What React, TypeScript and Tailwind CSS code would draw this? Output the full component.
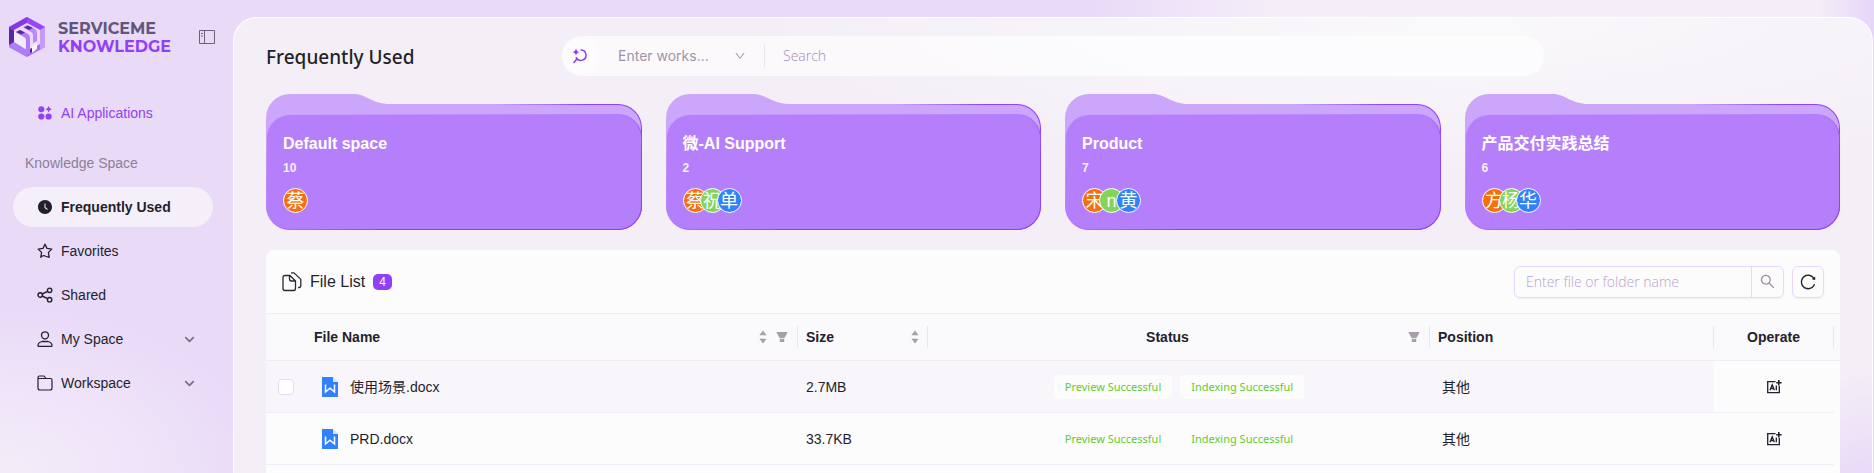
import React from "react";
import {
  AiFillClockCircle,
  AiFillFilter,
  AiOutlineDown,
  AiOutlineReload,
  AiOutlineSearch,
} from "react-icons/ai";
import { ChevronDown } from "lucide-react";

const ARIAL = "font-['Liberation_Sans','Noto_Sans_CJK_SC',sans-serif]";

function Logo() {
  return (
    <svg width="36" height="40" viewBox="0 0 36 40" aria-hidden="true">
      <path d="M18 0 36 10v20L18 40 0 30V10Z" fill="#a66bf7" />
      <path d="M18 0 0 10v18l5-2V13l13-7Z" fill="#8438e8" />
      <path d="M0 11l5 3v12l-5 3Z" fill="#5b25a8" />
      <path d="M18 0 36 10 31 13 18 6Z" fill="#9747f5" />
      <path d="M31 13l5-3v20l-5 3Z" fill="#c39bfa" />
      <path d="M5 13 18 6l13 7v14l-13 7-13-7Z" fill="#ebdafb" />
      <path d="M5 15l11 6v13L5 28Z" fill="#f3ecfb" />
      <path d="M14 10l4-2 8 4q2 1 2 4v8l-4 2v-8q0-2-2-3Z" fill="#b98afb" />
      <path d="M7 15l4-2 8 4q2 1 2 4v15l-4 2V23q0-2-2-3Z" fill="#b07cfa" />
      <path d="M7 15l4-2 5 2.500-4 2ZM15 10.500l4-2 5 2.500-4 2Z" fill="#5b25a8" />
      <path d="M0 28l5-3 13 8v7L0 30Z" fill="#b07cfa" />
      <path d="M23 29l5-3v6l-5 4Z" fill="#f6f2fa" />
      <path d="M21 32l2-1v4l-2 1Z" fill="#4b2a80" />
    </svg>
  );
}

const CollapseIcon = () => (
  <svg width="16" height="14" viewBox="0 0 16 14" fill="none" stroke="#6d6078" aria-hidden="true">
    <path d="M.5.5h15v13H.5ZM5.500.5v13M2 3.500h2M2 6h2" />
  </svg>
);

const AppsIcon = () => (
  <svg width="14" height="14" viewBox="0 0 14 14" fill="#9240f5" aria-hidden="true">
    <circle cx="3.300" cy="3.300" r="3" />
    <circle cx="3.300" cy="10.500" r="3.100" />
    <circle cx="10.600" cy="10.500" r="3.100" />
    <path d="M10.600 0q.5 2.600 3.200 3.200-2.700.6-3.200 3.200-.5-2.600-3.200-3.200Q10.100 2.600 10.600 0Z" />
  </svg>
);

const StarIcon = () => (
  <svg width="16" height="16" viewBox="0 0 16 16" fill="none" stroke="#241f2c" strokeWidth="1.300" strokeLinejoin="round" aria-hidden="true">
    <path d="M8 1.200 10 5.400l4.800.7-3.400 3.300.8 4.900Q10 14 8 13t-4.200 1.300l.8-4.900L1.200 6.100 6 5.400Z" />
  </svg>
);

const ShareIcon = () => (
  <svg width="16" height="16" viewBox="0 0 16 16" fill="none" stroke="#241f2c" strokeWidth="1.400" aria-hidden="true">
    <circle cx="3.200" cy="8" r="2.200" />
    <circle cx="12.600" cy="3.300" r="2.200" />
    <circle cx="12.600" cy="12.700" r="2.200" />
    <path d="m5.200 7 5.400-2.700M5.200 9l5.400 2.700" />
  </svg>
);

const UserIcon = () => (
  <svg width="16" height="16" viewBox="0 0 16 16" fill="none" stroke="#241f2c" strokeWidth="1.300" aria-hidden="true">
    <circle cx="8" cy="4.300" r="3.500" />
    <path d="M5 10.500h6q4 1.200 4 3.900 0 .9-.9.900H1.900q-.9 0-.9-.9 0-2.700 4-3.900Z" />
  </svg>
);

const FolderIcon = () => (
  <svg width="16" height="16" viewBox="0 0 16 16" fill="none" stroke="#241f2c" strokeWidth="1.200" aria-hidden="true">
    <path d="M1 13V2.500Q1 1 2.500 1H7l2 2.500h4.500Q15 3.500 15 5v8q0 2-2 2H3q-2 0-2-2ZM1 3.500h8" />
  </svg>
);

const MagicSearchIcon = () => (
  <svg width="16" height="16" viewBox="0 0 16 16" fill="none" stroke="#8f3df3" strokeWidth="1.500" aria-hidden="true">
    <path d="M9 2a5.200 5.200 0 1 1-4.800 7.600M4.600 11.200 2 14.500" strokeLinecap="round" />
    <path d="M4 .2Q4.500 3.600 7.800 4 4.500 4.500 4 7.800 3.500 4.500.2 4 3.500 3.600 4 .2Z" fill="#8f3df3" stroke="none" />
  </svg>
);

const FilesIcon = () => (
  <svg width="20" height="20" viewBox="0 0 20 20" fill="none" stroke="#2c2636" strokeWidth="1.300" strokeLinejoin="round" aria-hidden="true">
    <path d="M8 3.500H3Q1 3.500 1 5.500v11q0 2 2 2h8.500q2 0 2-2V9ZM7.500 3.500V7q0 2 2 2h4" />
    <path d="M9 .9h3l6.800 6.500v6q0 2.300-2.800 2.300" />
  </svg>
);

const WordIcon = () => (
  <svg width="16" height="20" viewBox="0 0 16 20" aria-hidden="true">
    <path d="M0 0h11v5h5v15H0Z" fill="#3080ff" />
    <path d="M11 0l5 5h-5Z" fill="#ead9f8" />
    <path d="M3.500 7.500v7.500l4.500-3.800 4.500 3.800V7.500" fill="none" stroke="#fff" strokeWidth="1.500" />
  </svg>
);

const AiAddIcon = () => (
  <svg width="16" height="14" viewBox="0 0 16 14" fill="none" stroke="#241f2c" strokeWidth="1.300" aria-hidden="true">
    <path d="M9.500 1.700H1.700v11h11.600V6" />
    <path d="m4 10.300 2.200-5.600 2.200 5.600M4.800 8.500h2.800M10.300 5.500v4.800" />
    <path d="M12.800 0v5.400M10.200 2.700h5.400" strokeWidth="1.600" />
  </svg>
);

const SortIcon = () => (
  <svg width="8" height="14" viewBox="0 0 8 14" fill="#a79dab" aria-hidden="true">
    <path d="M4 .5 7.600 5.200H.4ZM.4 8.800h7.200L4 13.500Z" />
  </svg>
);

function NavItem(props: {
  icon: React.ReactNode;
  label: string;
  active?: boolean;
  expandable?: boolean;
  className?: string;
}) {
  return (
    <a
      href="#"
      className={`flex h-10 items-center rounded-full pr-4 pl-6 text-sm ${
        props.active ? "bg-[#f4eff8] font-bold" : ""
      } ${props.className ?? "text-[#241f2c]"}`}
    >
      <span className="mr-2 flex w-4 justify-center">{props.icon}</span>
      <span className="flex-1">{props.label}</span>
      {props.expandable && <ChevronDown size={15} strokeWidth={2.8} className="text-[#7a7084]" />}
    </a>
  );
}

function Sidebar() {
  return (
    <aside className="flex w-[233px] shrink-0 flex-col">
      <div className="flex items-center pt-[17px] pr-[18px] pl-[9px]">
        <Logo />
        <div className="ml-[13px] flex-1 pt-0.5 font-['Montserrat','Inter',sans-serif] text-base leading-[18px] font-bold">
          <div className="text-[#62547c]">SERVICEME</div>
          <div className="text-[#9240f5]">KNOWLEDGE</div>
        </div>
        <button type="button" aria-label="Collapse sidebar">
          <CollapseIcon />
        </button>
      </div>
      <nav className="mt-9 flex flex-col gap-1 pr-5 pl-[13px]">
        <NavItem icon={<AppsIcon />} label="AI Applications" className="text-[#9240f5]" />
        <h2 className="mt-4 mb-2.5 pl-3 text-sm text-[#8c8096]">Knowledge Space</h2>
        <NavItem icon={<AiFillClockCircle size={16} />} label="Frequently Used" active />
        <NavItem icon={<StarIcon />} label="Favorites" />
        <NavItem icon={<ShareIcon />} label="Shared" />
        <NavItem icon={<UserIcon />} label="My Space" expandable />
        <NavItem icon={<FolderIcon />} label="Workspace" expandable />
      </nav>
    </aside>
  );
}

const AVATAR_COLORS = ["bg-[#f5700c]", "bg-[#84d45c]", "bg-[#2f82fb]"];

const spaces = [
  { name: "Default space", count: 10, members: ["蔡"] },
  { name: "微-AI Support", count: 2, members: ["蔡", "祝", "单"] },
  { name: "Product", count: 7, members: ["宋", "n", "黄"] },
  { name: "产品交付实践总结", count: 6, members: ["方", "杨", "华"] },
];

function SpaceCard({ name, count, members }: (typeof spaces)[number]) {
  return (
    <a href="#" className="grid h-[136px] text-white">
      <div className="col-start-1 row-start-1 mt-[10px] rounded-3xl bg-linear-to-r from-[#cba6fa] from-60% to-[#9240f5] to-85% p-px">
        <div className="h-full rounded-[23px] bg-[#cba6fa]" />
      </div>
      <svg className="col-start-1 row-start-1" width="124" height="60" viewBox="0 0 124 60" aria-hidden="true">
        <path d="M0 60V24A24 24 0 0 1 24 0H88C100 0 106 10 124 10V60Z" fill="#cba6fa" />
      </svg>
      <div className="col-start-1 row-start-1 mt-5 rounded-3xl bg-linear-to-br from-[#cba6fa] via-[#b57ffc] via-45% to-[#9240f5] to-65% p-px">
        <div className="h-full rounded-[23px] bg-[#b57ffc] px-4 pt-[17px]">
          <h3 className="text-base leading-6 font-bold">{name}</h3>
          <p className="mt-0.5 text-xs leading-5 font-bold text-[#f6effe]">{count}</p>
          <div className="mt-2.5 flex">
            {members.map((m, i) => (
              <span
                key={m}
                className={`flex size-[25px] items-center justify-center rounded-full border border-white text-lg leading-none ${
                  AVATAR_COLORS[i]
                } ${i > 0 ? "-ml-2" : ""}`}
              >
                {m}
              </span>
            ))}
          </div>
        </div>
      </div>
    </a>
  );
}

function HeadCell(props: { children?: React.ReactNode; icons?: React.ReactNode; center?: boolean }) {
  return (
    <th scope="col" className="border-y border-[#f0eaf5] p-0 font-bold">
      <div className="flex h-[22px] items-center gap-2 border-r border-[#ebe5f0] px-2">
        <span className={`flex-1 ${props.center ? "text-center" : "text-left"}`}>{props.children}</span>
        {props.icons}
      </div>
    </th>
  );
}

const Tag = ({ children }: { children: React.ReactNode }) => (
  <span className="flex h-6 items-center rounded bg-[#fcfcfc] px-[11px] font-['Segoe_UI','Noto_Sans',sans-serif] text-[11px] text-[#5fcb30]">
    {children}
  </span>
);

const files = [
  { name: "使用场景.docx", size: "2.7MB", position: "其他", hovered: true },
  { name: "PRD.docx", size: "33.7KB", position: "其他", hovered: false },
];

function FileList() {
  const filter = (
    <button type="button" aria-label="Filter">
      <AiFillFilter size={14} className="text-[#a79dab]" />
    </button>
  );
  const sort = (
    <button type="button" aria-label="Sort">
      <SortIcon />
    </button>
  );
  return (
    <section className="mt-5 flex-1 rounded-t-lg bg-[#fcfcfc] text-[#241f2c]">
      <header className="flex h-[63px] items-center px-4">
        <FilesIcon />
        <h2 className="ml-2 text-base">File List</h2>
        <span className="ml-2 flex h-4 w-[19px] items-center justify-center rounded-[5px] bg-[#9240f5] text-xs text-white">
          4
        </span>
        <div className="ml-auto flex h-8 w-[270px] rounded-md border border-[#e9d7f9] shadow-xs">
          <input
            type="text"
            aria-label="Enter file or folder name"
            placeholder="Enter file or folder name"
            className="min-w-0 flex-1 bg-transparent px-[11px] font-['Open_Sans',sans-serif] text-sm font-light outline-none placeholder:text-[#b9a3cb]"
          />
          <button
            type="button"
            aria-label="Search files"
            className="flex w-8 items-center justify-center border-l border-[#e9d7f9] text-[#9a8da3]"
          >
            <AiOutlineSearch size={17} />
          </button>
        </div>
        <button
          type="button"
          aria-label="Reload"
          className="ml-2 flex size-8 items-center justify-center rounded-md border border-[#e9d7f9] shadow-xs"
        >
          <AiOutlineReload size={18} />
        </button>
      </header>
      <table className="w-full table-fixed border-separate border-spacing-0 text-sm">
        <colgroup>
          <col className="w-10" />
          <col />
          <col className="w-[130px]" />
          <col className="w-[502px]" />
          <col className="w-[284px]" />
          <col className="w-[120px]" />
          <col className="w-1.5" />
        </colgroup>
        <thead>
          <tr className="h-12 bg-[#faf9fb]">
            <td className="border-y border-[#f0eaf5]" />
            <HeadCell icons={<>{sort}{filter}</>}>File Name</HeadCell>
            <HeadCell icons={sort}>Size</HeadCell>
            <HeadCell icons={filter} center>Status</HeadCell>
            <HeadCell>Position</HeadCell>
            <HeadCell center>Operate</HeadCell>
            <td className="border-y border-[#f0eaf5]" />
          </tr>
        </thead>
        <tbody>
          {files.map((f) => (
            <tr
              key={f.name}
              className={`h-[52px] [&>td]:border-b [&>td]:border-[#f3ecf7] [&>td]:p-0 ${
                f.hovered ? "[&>td]:bg-[#f8f6fa]" : ""
              }`}
            >
              <td>
                {f.hovered && (
                  <input
                    type="checkbox"
                    aria-label={`Select ${f.name}`}
                    className="mx-auto block size-4 appearance-none rounded border border-[#e9d7f9] bg-white"
                  />
                )}
              </td>
              <td>
                <div className="flex items-center gap-3 pl-4">
                  <WordIcon />
                  {f.name}
                </div>
              </td>
              <td>
                <div className="pl-2">{f.size}</div>
              </td>
              <td>
                <div className="flex justify-center gap-2">
                  <Tag>Preview Successful</Tag>
                  <Tag>Indexing Successful</Tag>
                </div>
              </td>
              <td>
                <div className="pl-3">{f.position}</div>
              </td>
              <td className="bg-[#fcfcfc]!">
                <button type="button" aria-label={`Ask AI about ${f.name}`} className="mx-auto block">
                  <AiAddIcon />
                </button>
              </td>
              <td className="border-b-0! bg-[#fcfcfc]!" />
            </tr>
          ))}
        </tbody>
      </table>
    </section>
  );
}

function Header() {
  return (
    <header className="grid h-10 grid-cols-[296px_1fr_296px] items-center">
      <h1 className="pt-0.5 font-['Segoe_UI','Noto_Sans',sans-serif] text-[19px] font-medium text-[#241f2c]">
        Frequently Used
      </h1>
      <div className="flex h-10 items-center rounded-full bg-white/60 pr-5">
        <button
          type="button"
          aria-label="Smart search"
          className="flex size-9 items-center justify-center rounded-full bg-[#fcfcfc]"
        >
          <MagicSearchIcon />
        </button>
        <button
          type="button"
          className="ml-5 flex w-32 items-center justify-between font-['Inter',sans-serif] text-sm text-[#a094aa]"
        >
          <span>Enter works...</span>
          <AiOutlineDown size={12} />
        </button>
        <span className="ml-[18px] h-6 w-px bg-[#ebe4f1]" />
        <input
          type="text"
          aria-label="Search"
          placeholder="Search"
          className="ml-[18px] min-w-0 flex-1 bg-transparent font-['Open_Sans',sans-serif] text-sm font-light outline-none placeholder:text-[#a78bbd]"
        />
      </div>
    </header>
  );
}

export default function App() {
  return (
    <div
      className={`${ARIAL} flex h-screen overflow-hidden bg-[#e9daf8] bg-[radial-gradient(ellipse_270px_170px_at_0%_100%,#f3edf8_0%,#efe4f9_50%,transparent_100%),linear-gradient(90deg,#e9daf8_58%,#f4eef8_68%,#f4eef8_97%,#e6d5f8_100%)]`}
    >
      <Sidebar />
      <main className="mt-[17px] mr-px flex min-w-0 flex-1 flex-col rounded-t-3xl border border-b-0 border-white bg-[#f4eff7] bg-[radial-gradient(ellipse_700px_150px_at_75%_0%,#faf9fb,transparent),linear-gradient(to_top_left,#e9daf8_0%,transparent_12%)] px-8 pt-[18px]">
        <Header />
        <div className="mt-[18px] grid grid-cols-4 gap-6">
          {spaces.map((s) => (
            <SpaceCard key={s.name} {...s} />
          ))}
        </div>
        <FileList />
      </main>
    </div>
  );
}
